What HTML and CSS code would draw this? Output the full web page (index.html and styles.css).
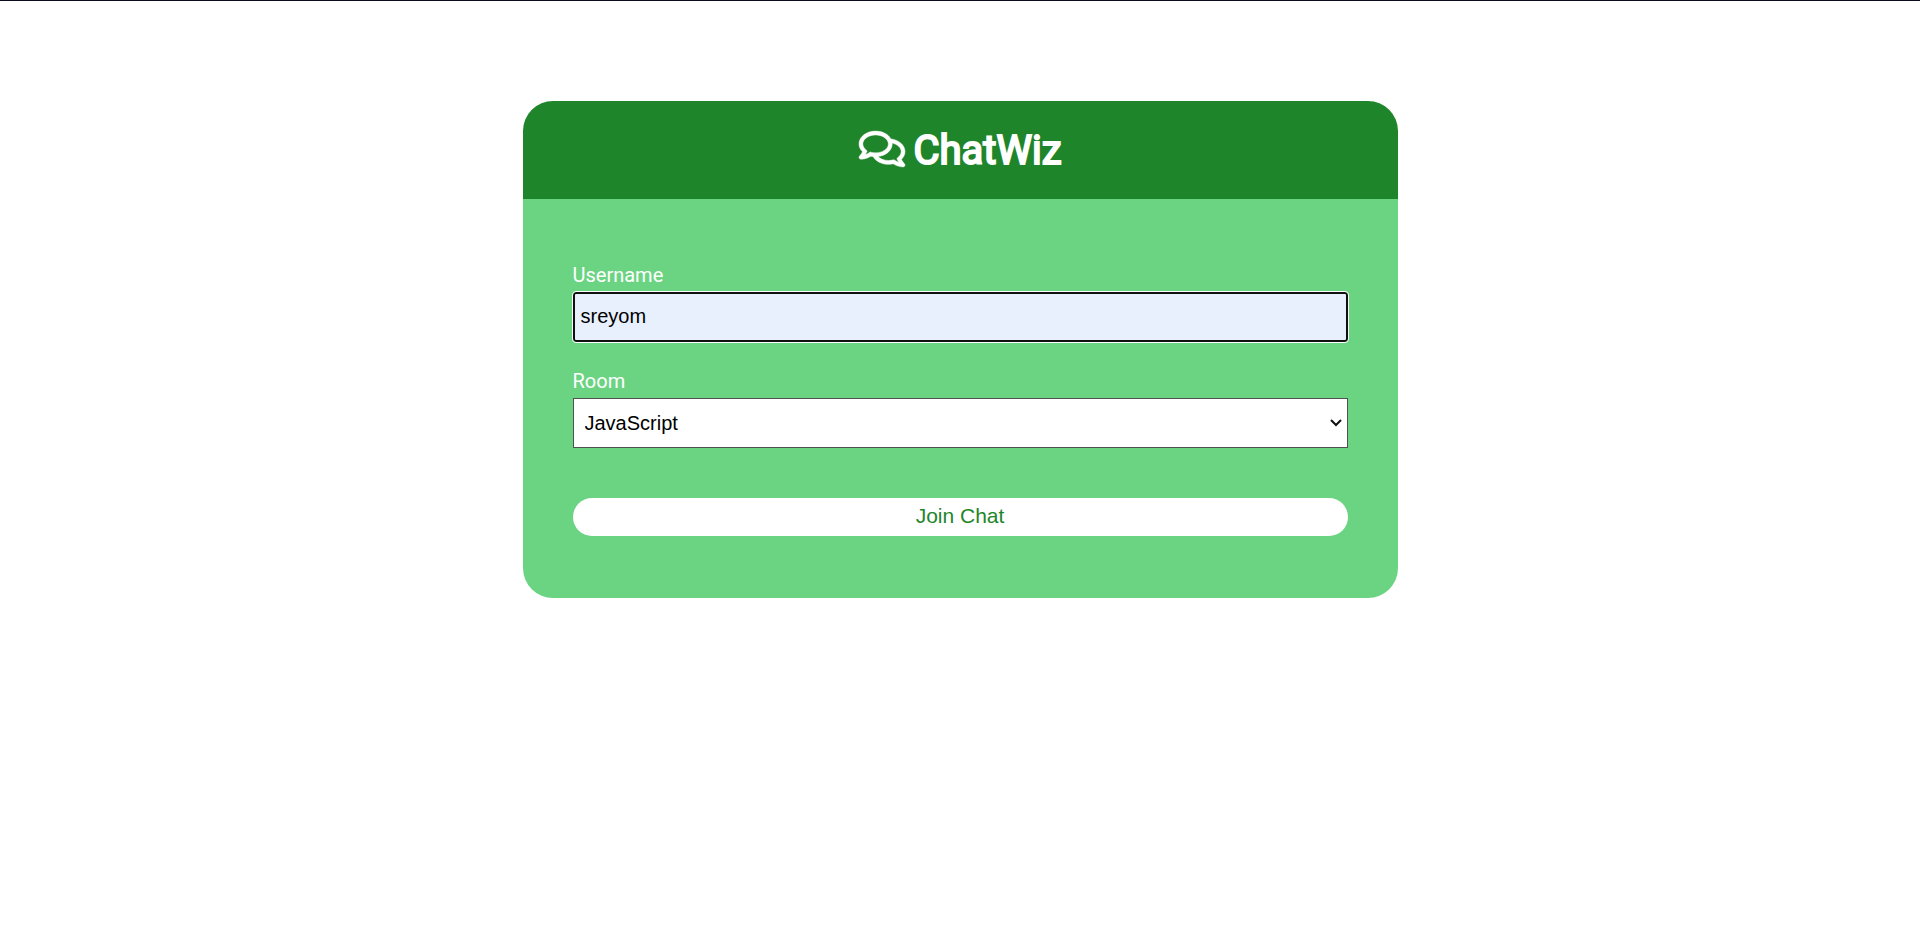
FILE: index.html
```html
<!DOCTYPE html>
<html lang="en">
<head>
  <meta charset="UTF-8">
  <meta name="viewport" content="width=device-width, initial-scale=1">
  <title>ChatWiz</title>
  <link rel="stylesheet" href="styles.css">
</head>
<body>
  <div class="join-container">
    <header class="join-header">
      <svg class="logo" viewBox="0 32 576 448" aria-hidden="true"><path d="M532 386.2c27.5-27.1 44-61.1 44-98.2 0-80-76.5-146.1-176.2-157.9C368.3 72.5 294.3 32 208 32 93.1 32 0 103.6 0 192c0 37 16.5 71 44 98.2-15.3 30.7-37.3 54.5-37.7 54.9-6.3 6.7-8.1 16.5-4.4 25 3.6 8.5 12 14 21.2 14 53.5 0 96.7-20.2 125.2-38.8 9.2 2.1 18.7 3.7 28.4 4.9C208.1 407.6 281.8 448 368 448c20.8 0 40.8-2.4 59.8-6.8C456.3 459.7 499.4 480 553 480c9.2 0 17.5-5.5 21.2-14 3.6-8.5 1.9-18.3-4.4-25-.4-.3-22.5-24.1-37.8-54.8zm-392.8-92.3L122.1 305c-14.1 9.1-28.5 16.3-43.1 21.4 2.7-4.7 5.4-9.7 8-14.8l15.5-31.1L77.7 256C64.2 242.6 48 220.7 48 192c0-60.7 73.3-112 160-112s160 51.3 160 112-73.3 112-160 112c-16.5 0-33-1.9-49-5.6l-19.8-4.5zM498.3 352l-24.7 24.4 15.5 31.1c2.6 5.1 5.3 10.1 8 14.8-14.6-5.1-29-12.3-43.1-21.4l-17.1-11.1-19.9 4.6c-16 3.7-32.5 5.6-49 5.6-54 0-102.2-20.1-131.3-49.7C338 339.5 416 272.9 416 192c0-3.4-.4-6.7-.7-10C479.7 196.5 528 238.8 528 288c0 28.7-16.2 50.6-29.7 64z"/></svg>
      <h1>ChatWiz</h1>
    </header>
    <main class="join-main">
      <form>
        <div class="form-control">
          <label for="username">Username</label>
          <input class="field field-focused" type="text" id="username" name="username" value="sreyom" autocomplete="off" spellcheck="false">
        </div>
        <div class="form-control">
          <label for="room">Room</label>
          <select class="field field-select" id="room" name="room">
            <option>JavaScript</option>
            <option>Python</option>
            <option>PHP</option>
            <option>C#</option>
            <option>Ruby</option>
            <option>Java</option>
          </select>
        </div>
        <button class="btn" type="submit">Join Chat</button>
      </form>
    </main>
  </div>
</body>
</html>
```

FILE: styles.css
```css
* {
  box-sizing: border-box;
  margin: 0;
  padding: 0;
}

body {
  border-top: 1px solid #0a0a20;
  background: #fff;
  font-family: Roboto, "Liberation Sans", sans-serif;
  font-size: 20px;
}

.join-container {
  max-width: 875px;
  margin: 100px auto 0;
  border-radius: 30px;
  overflow: hidden;
  color: #fff;
}

.join-header {
  display: flex;
  justify-content: center;
  align-items: center;
  gap: 9px;
  padding: 23px 20px 25px;
  background: #1f852a;
}

.join-header h1 {
  padding-top: 4px;
  font-size: 40px;
  font-weight: 400;
  line-height: 46px;
  -webkit-text-stroke: 2px #fff;
}

.logo {
  width: 46px;
  height: 36px;
  overflow: visible;
  fill: currentColor;
  stroke: currentColor;
  stroke-width: 6;
}

.join-main {
  padding: 62px 50px;
  background: #6bd482;
}

.form-control {
  margin-bottom: 25px;
}

label {
  display: block;
  padding-top: 2px;
  margin-bottom: 5px;
  line-height: 24px;
}

.field {
  display: block;
  width: 100%;
  height: 50px;
  padding: 0 5px 2px;
  border: 1px solid #505050;
  background-color: #fff;
  color: #000;
  font-family: "Liberation Sans", Arial, sans-serif;
  font-size: 20px;
}

.field-focused {
  padding: 0 6px 2px;
  border: 2px solid #101010;
  border-radius: 3px;
  outline: 1px solid #fff;
  background-color: #e8f0fe;
}

.field-select {
  padding: 0 24px 0 11px;
  appearance: none;
  background-image: url("data:image/svg+xml,%3Csvg xmlns='http://www.w3.org/2000/svg' viewBox='0 0 12 8'%3E%3Cpath d='M1 1l5 5 5-5' fill='none' stroke='%23101010' stroke-width='2'/%3E%3C/svg%3E");
  background-repeat: no-repeat;
  background-position: right 5px center;
  background-size: 12px 8px;
}

.btn {
  display: block;
  width: 100%;
  height: 38px;
  padding-bottom: 2px;
  margin-top: 50px;
  border: 0;
  border-radius: 20px;
  background: #fff;
  color: #1f852a;
  font-family: "Liberation Sans", Arial, sans-serif;
  font-size: 21px;
}
```
